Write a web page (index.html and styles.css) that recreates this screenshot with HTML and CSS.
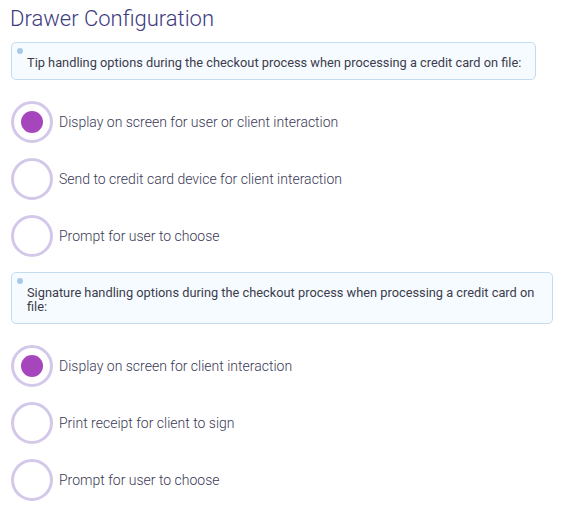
FILE: index.html
```html
<!DOCTYPE html>
<html>
<head>
<meta charset="utf-8">
<link rel="stylesheet" href="styles.css">
</head>
<body>
<div class="page">
  <h1 class="title">Drawer Configuration</h1>

  <div class="info"><span class="dot"></span>Tip handling options during the checkout process when processing a credit card on file:</div>
  <div class="options">
    <label class="option"><span class="radio checked"></span><span class="label">Display on screen for user or client interaction</span></label>
    <label class="option"><span class="radio"></span><span class="label">Send to credit card device for client interaction</span></label>
    <label class="option"><span class="radio"></span><span class="label">Prompt for user to choose</span></label>
  </div>

  <div class="info"><span class="dot"></span>Signature handling options during the checkout process when processing a credit card on file:</div>
  <div class="options">
    <label class="option"><span class="radio checked"></span><span class="label">Display on screen for client interaction</span></label>
    <label class="option"><span class="radio"></span><span class="label">Print receipt for client to sign</span></label>
    <label class="option"><span class="radio"></span><span class="label">Prompt for user to choose</span></label>
  </div>
</div>
</body>
</html>
```

FILE: styles.css
```css
html, body {
  margin: 0;
  padding: 0;
  background: #ffffff;
}
body {
  font-family: Roboto, "Liberation Sans", sans-serif;
}
.page {
  width: 542px;
  padding: 4px 0 0 11px;
  display: flex;
  flex-direction: column;
  align-items: flex-start;
}
.title {
  margin: 0 0 0 -1px;
  font-size: 22px;
  font-weight: 300;
  color: #3e3b7e;
  line-height: 30px;
}
.info {
  position: relative;
  margin-top: 8px;
  box-sizing: border-box;
  max-width: 542px;
  padding: 13px 14px 9px 15px;
  background: #f6fbff;
  border: 1px solid #c3dcf0;
  border-radius: 5px;
  font-size: 12.8px;
  line-height: 14px;
  color: #3c3c4c;
}
.dot {
  position: absolute;
  left: 5px;
  top: 5px;
  width: 6px;
  height: 6px;
  border-radius: 50%;
  background: #a9c9ea;
}
.options {
  display: flex;
  flex-direction: column;
  gap: 15px;
  padding: 21px 0 7px 0;
}
.option {
  display: flex;
  align-items: center;
  gap: 6px;
}
.radio {
  box-sizing: border-box;
  width: 42px;
  height: 42px;
  border: 3px solid #d3c8ea;
  border-radius: 50%;
  display: flex;
  align-items: center;
  justify-content: center;
  background: #fff;
}
.radio.checked::after {
  content: "";
  width: 22px;
  height: 22px;
  border-radius: 50%;
  background: #a646bd;
}
.label {
  font-size: 14px;
  font-weight: 300;
  color: #3a3956;
}
```
